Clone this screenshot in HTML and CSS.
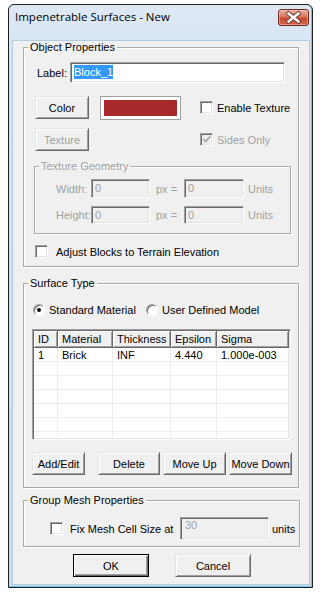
FILE: index.html
```html
<!DOCTYPE html>
<html lang="en">
<head>
  <meta charset="UTF-8">
  <meta name="viewport" content="width=device-width, initial-scale=1.0">
  <title>Impenetrable Surfaces - New</title>
  <link rel="stylesheet" href="styles.css">
</head>
<body>
  <div class="window">
    <!-- Title bar -->
    <div class="titlebar">
      <span class="title">Impenetrable Surfaces - New</span>
      <span class="close-btn">
        <svg width="29" height="15" viewBox="0 0 29 15">
          <path d="M9.5 3.5 L19.5 11.5 M19.5 3.5 L9.5 11.5" stroke="#6b3a30" stroke-width="4.2" stroke-linecap="square" fill="none"/>
          <path d="M9.5 3.5 L19.5 11.5 M19.5 3.5 L9.5 11.5" stroke="#fff" stroke-width="2.4" stroke-linecap="square" fill="none"/>
        </svg>
      </span>
    </div>

    <div class="client">
      <!-- Object Properties -->
      <fieldset class="group group-object">
        <legend>Object Properties</legend>
        <div class="label-row">
          <span class="field-label">Label:</span>
          <div class="textbox label-box"><span class="selected">Block_1</span></div>
        </div>

        <div class="color-grid">
          <button class="btn">Color</button>
          <div class="swatch"><div class="swatch-fill"></div></div>
          <label class="check"><span class="checkbox"></span>Enable Texture</label>
          <button class="btn" disabled>Texture</button>
          <span></span>
          <label class="check disabled">
            <span class="checkbox checked">
              <svg width="9" height="9" viewBox="0 0 9 9"><path d="M1 4 L3.5 6.5 L8 1.5" stroke="#a0a0a0" stroke-width="1.6" fill="none"/></svg>
            </span>Sides Only
          </label>
        </div>

        <fieldset class="group group-geometry disabled">
          <legend>Texture Geometry</legend>
          <div class="geo-grid">
            <span>Width:</span>
            <div class="textbox off">0</div>
            <span class="px">px =</span>
            <div class="textbox off">0</div>
            <span class="unit">Units</span>
            <span>Height:</span>
            <div class="textbox off">0</div>
            <span class="px">px =</span>
            <div class="textbox off">0</div>
            <span class="unit">Units</span>
          </div>
        </fieldset>

        <label class="check adjust-row"><span class="checkbox"></span>Adjust Blocks to Terrain Elevation</label>
      </fieldset>

      <!-- Surface Type -->
      <fieldset class="group group-surface">
        <legend>Surface Type</legend>
        <div class="radio-row">
          <label class="radio-item first"><span class="radio on"></span>Standard Material</label>
          <label class="radio-item"><span class="radio"></span>User Defined Model</label>
        </div>

        <div class="listview">
          <table class="grid">
            <colgroup>
              <col style="width:24px">
              <col style="width:55px">
              <col style="width:58px">
              <col style="width:46px">
              <col style="width:72px">
            </colgroup>
            <thead>
              <tr><th>ID</th><th>Material</th><th>Thickness</th><th>Epsilon</th><th>Sigma</th></tr>
            </thead>
            <tbody>
              <tr><td>1</td><td>Brick</td><td>INF</td><td>4.440</td><td>1.000e-003</td></tr>
              <tr><td></td><td></td><td></td><td></td><td></td></tr>
              <tr><td></td><td></td><td></td><td></td><td></td></tr>
              <tr><td></td><td></td><td></td><td></td><td></td></tr>
              <tr><td></td><td></td><td></td><td></td><td></td></tr>
              <tr><td></td><td></td><td></td><td></td><td></td></tr>
              <tr><td></td><td></td><td></td><td></td><td></td></tr>
            </tbody>
          </table>
        </div>

        <div class="list-buttons">
          <button class="btn btn-add">Add/Edit</button>
          <button class="btn btn-delete">Delete</button>
          <button class="btn btn-move">Move Up</button>
          <button class="btn btn-move">Move Down</button>
        </div>
      </fieldset>

      <!-- Group Mesh Properties -->
      <fieldset class="group group-mesh">
        <legend>Group Mesh Properties</legend>
        <div class="mesh-row">
          <span class="checkbox"></span>
          <span class="mesh-label">Fix Mesh Cell Size at</span>
          <div class="textbox off mesh-box">30</div>
          <span class="mesh-unit">units</span>
        </div>
      </fieldset>

      <div class="dialog-buttons">
        <button class="btn btn-dialog btn-default">OK</button>
        <button class="btn btn-dialog">Cancel</button>
      </div>
    </div>
  </div>
</body>
</html>
```

FILE: styles.css
```css
/* General */
body {
  margin: 0;
  background: #fff;
  font-family: "Liberation Sans", Arial, sans-serif;
  font-size: 11px;
  color: #000;
}

/* Window frame */
.window {
  width: 305px;
  margin: 4px 0 0 8px;
  padding: 0 3px 3px 4px;
  box-sizing: border-box;
  border: 1px solid #1e1e1e;
  border-radius: 6px 6px 0 0;
  background: linear-gradient(#dfe9f5, #d3e2f2 60px, #c9dcf0);
  box-shadow: inset 0 -1px 0 #6fc3ea, inset -1px 0 0 #6fc3ea;
}

.titlebar {
  height: 24px;
  display: flex;
  justify-content: space-between;
  align-items: flex-start;
  padding-left: 2px;
}

.title {
  font-family: "Open Sans", "Noto Sans", sans-serif;
  font-size: 11.5px;
  line-height: 23px;
  color: #000;
}

.close-btn {
  width: 31px;
  height: 17px;
  margin-top: 4px;
  box-sizing: border-box;
  border: 1px solid #6e2b1f;
  border-radius: 3px;
  background: linear-gradient(#eab0a2, #d9765f 45%, #c44a30 55%, #d2664a);
  box-shadow: inset 0 0 0 1px rgba(255, 220, 210, 0.45);
  display: flex;
}

.client {
  background: #f0f0f0;
  padding-bottom: 7px;
  box-shadow: 0 0 0 1px #b4cbe4;
}

/* Group boxes */
.group {
  margin: 0 0 0 10px;
  padding: 0;
  width: 276px;
  box-sizing: border-box;
  min-inline-size: 0;
  border: 1px solid #a9a9a9;
  box-shadow: inset 1px 1px 0 #fff, 1px 1px 0 #fff;
}

.group legend {
  margin-left: 4px;
  padding: 0 2px;
  line-height: 13px;
  height: 13px;
}

.group-object {
  margin-top: 12px;
  padding-bottom: 8px;
}

.group-surface {
  margin-top: 10px;
  padding-bottom: 12px;
}

.group-mesh {
  margin-top: 6px;
  padding-bottom: 6px;
  width: 277px;
}

.disabled,
.disabled legend {
  color: #a0a0a0;
}

/* Inputs */
.textbox {
  box-sizing: border-box;
  height: 19px;
  padding-left: 3px;
  line-height: 17px;
  background: #fff;
  border: 1px solid;
  border-color: #a0a0a0 #fff #fff #a0a0a0;
  box-shadow: inset 1px 1px 0 #696969, inset -1px -1px 0 #e3e3e3;
  color: #000;
}

.textbox.off {
  background: #f0f0f0;
  color: #a0a0a0;
}

.label-row {
  display: flex;
  align-items: center;
  margin: 8px 0 0 13px;
}

.field-label {
  width: 33px;
}

.label-box {
  width: 215px;
  height: 21px;
  line-height: 19px;
}

.selected {
  background: #3399ff;
  color: #fff;
  padding: 1px 0;
}

/* Buttons */
.btn {
  box-sizing: border-box;
  height: 23px;
  padding: 0;
  font: inherit;
  color: #000;
  background: #f0f0f0;
  border: 1px solid;
  border-color: #e3e3e3 #696969 #696969 #e3e3e3;
  box-shadow: inset 1px 1px 0 #fff, inset -1px -1px 0 #a0a0a0;
}

.btn:disabled {
  color: #a0a0a0;
}

.color-grid {
  display: grid;
  grid-template-columns: 54px 81px 1fr;
  grid-template-rows: 23px 23px;
  column-gap: 11px;
  row-gap: 9px;
  margin: 13px 0 0 11px;
}

.swatch {
  box-sizing: border-box;
  height: 24px;
  border: 1px solid #a0a0a0;
  background: #fff;
  padding: 3px;
}

.swatch-fill {
  height: 100%;
  background: #a8292a;
}

/* Checkboxes and radios */
.check {
  display: flex;
  align-items: center;
}

.color-grid .check {
  margin-left: 8px;
}

.checkbox {
  width: 13px;
  height: 13px;
  box-sizing: border-box;
  flex: none;
  background: #fff;
  border: 1px solid;
  border-color: #a0a0a0 #fff #fff #a0a0a0;
  box-shadow: inset 1px 1px 0 #696969, inset -1px -1px 0 #e3e3e3;
  margin-right: 4px;
  display: flex;
  align-items: center;
  justify-content: center;
}

.checkbox.checked {
  background: #f0f0f0;
}

.group-geometry {
  width: 257px;
  margin: 9px 0 0 10px;
  padding-bottom: 9px;
}

.geo-grid {
  display: grid;
  grid-template-columns: 35px 59px 34px 60px auto;
  grid-template-rows: 19px 18px;
  row-gap: 8px;
  align-items: center;
  margin: 6px 0 0 21px;
}

.geo-grid .textbox {
  height: 100%;
}

.geo-grid .px {
  padding-left: 6px;
}

.geo-grid .unit {
  padding-left: 4px;
}

.adjust-row {
  margin: 11px 0 0 11px;
  height: 13px;
}

.adjust-row .checkbox {
  margin-right: 8px;
}

.radio-row {
  display: flex;
  height: 13px;
  margin: 13px 0 0 9px;
}

.radio-item {
  display: flex;
  align-items: center;
}

.radio-item.first {
  width: 113px;
}

.radio {
  width: 12px;
  height: 12px;
  box-sizing: border-box;
  border-radius: 50%;
  background: #fff;
  border: 1px solid;
  border-color: #a0a0a0 #fff #fff #a0a0a0;
  box-shadow: inset 1px 1px 0 #696969;
  margin-right: 4px;
  display: flex;
  align-items: center;
  justify-content: center;
}

.radio.on::after {
  content: "";
  width: 4px;
  height: 4px;
  border-radius: 50%;
  background: #000;
}

/* List view */
.listview {
  width: 259px;
  height: 111px;
  box-sizing: border-box;
  margin: 13px 0 0 8px;
  padding: 1px;
  overflow: hidden;
  background: #fff;
  border: 1px solid;
  border-color: #a0a0a0 #fff #fff #a0a0a0;
  box-shadow: inset 1px 1px 0 #696969, inset -1px -1px 0 #e3e3e3;
}

.grid {
  width: 255px;
  table-layout: fixed;
  border-collapse: separate;
  border-spacing: 0;
}

.grid th {
  height: 17px;
  box-sizing: border-box;
  padding: 0 0 0 4px;
  text-align: left;
  font-weight: normal;
  background: #f0f0f0;
  border-right: 1px solid #696969;
  border-bottom: 1px solid #696969;
  box-shadow: inset 1px 1px 0 #fff, inset -1px -1px 0 #a0a0a0;
}

.grid td {
  height: 14px;
  box-sizing: border-box;
  padding: 0 0 0 4px;
  border-right: 1px solid #ececec;
  border-bottom: 1px solid #ececec;
  white-space: nowrap;
}

.list-buttons {
  display: flex;
  margin: 12px 0 0 8px;
}

.btn-add {
  width: 53px;
  margin-right: 13px;
}

.btn-delete {
  width: 62px;
  margin-right: 3px;
}

.btn-move {
  width: 63px;
  margin-right: 3px;
}

/* Mesh row */
.mesh-row {
  display: flex;
  align-items: center;
  margin: 10px 0 0 26px;
}

.mesh-row .checkbox {
  margin-right: 7px;
}

.mesh-label {
  width: 110px;
}

.mesh-box {
  width: 89px;
  height: 23px;
  line-height: 15px;
  padding-left: 4px;
}

.mesh-unit {
  padding-left: 3px;
}

/* Dialog buttons */
.dialog-buttons {
  display: flex;
  gap: 26px;
  margin: 7px 0 0 60px;
}

.btn-dialog {
  width: 76px;
}

.btn-default {
  border-color: #000;
  box-shadow: inset 1px 1px 0 #fff, inset -1px -1px 0 #696969, inset -2px -2px 0 #a0a0a0;
}
```
